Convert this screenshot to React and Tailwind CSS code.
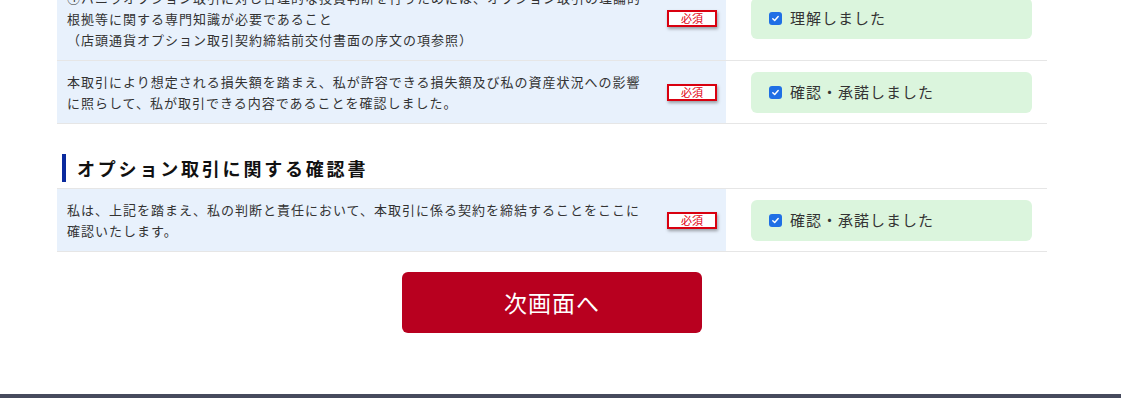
import React from 'react'

const FONT = { fontFamily: '"Noto Sans CJK JP", "Noto Sans", sans-serif' }

function Check() {
  return (
    <span className="w-[13px] h-[13px] rounded-[3px] bg-[#1f6fe5] flex items-center justify-center shrink-0">
      <svg width="9" height="9" viewBox="0 0 10 10" fill="none">
        <path d="M2 5.2 L4.1 7.3 L8 2.8" stroke="white" strokeWidth="1.6" strokeLinecap="round" strokeLinejoin="round" />
      </svg>
    </span>
  )
}

function Row({ lines, label, top }) {
  return (
    <div className={`flex border-b border-[#e6e6e6] ${top ? 'border-t' : ''}`}>
      <div className="w-[669px] bg-[#e8f1fc] flex items-center pl-[10px] pr-[9px] py-[10px]">
        <div className="flex-1 text-[13px] tracking-[1px] leading-[21px] text-[#333]">
          {lines.map((l, i) => <div key={i} className="whitespace-nowrap">{l}</div>)}
        </div>
        <span className="w-[50px] h-[17px] border-2 border-[#d9000f] bg-white text-[#e0000f] text-[11px] leading-[13px] flex items-center justify-center shadow-[1px_2px_3px_rgba(0,0,0,0.35)] shrink-0">
          必須
        </span>
      </div>
      <div className="flex-1 flex items-center pl-[25px] pr-[15px]">
        <div className="flex-1 h-[41px] rounded-md bg-[#dbf5dd] flex items-center gap-[8px] pl-[18px]">
          <Check />
          <span className="text-[15px] tracking-[1px] text-[#333]">{label}</span>
        </div>
      </div>
    </div>
  )
}

export default function App() {
  return (
    <div className="min-h-[409px] bg-white overflow-hidden flex flex-col" style={FONT}>
      <div className="w-[990px] ml-[57px] -mt-[23px]">
        <Row
          lines={[
            '④バニラオプション取引に対し合理的な投資判断を行うためには、オプション取引の理論的',
            '根拠等に関する専門知識が必要であること',
            '（店頭通貨オプション取引契約締結前交付書面の序文の項参照）',
          ]}
          label="理解しました"
        />
        <Row
          lines={[
            '本取引により想定される損失額を踏まえ、私が許容できる損失額及び私の資産状況への影響',
            'に照らして、私が取引できる内容であることを確認しました。',
          ]}
          label="確認・承諾しました"
        />

        <div className="mt-[30px] mb-[6px] flex items-center gap-[11px] pl-[5px]">
          <span className="w-[4px] h-[28px] bg-[#0a2a9e]" />
          <h2 className="text-[18px] font-bold tracking-[2.8px] text-[#111]">オプション取引に関する確認書</h2>
        </div>

        <Row
          top
          lines={[
            '私は、上記を踏まえ、私の判断と責任において、本取引に係る契約を締結することをここに',
            '確認いたします。',
          ]}
          label="確認・承諾しました"
        />

        <div className="flex justify-center mt-[20px]">
          <button className="w-[300px] h-[61px] rounded-md bg-[#b8001f] text-white text-[23px] tracking-[1px]">
            次画面へ
          </button>
        </div>
      </div>
      <div className="mt-[61px] h-[4px] bg-[#474b5d]" />
    </div>
  )
}
